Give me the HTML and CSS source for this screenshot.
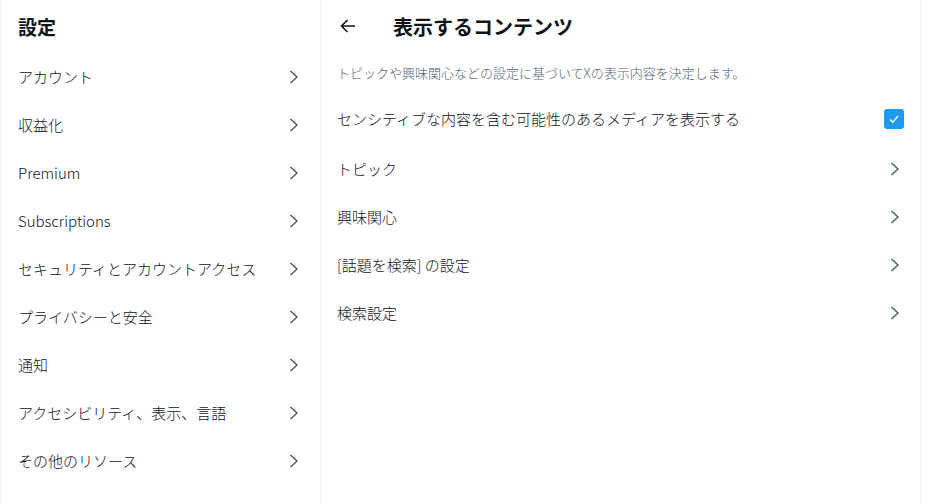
FILE: index.html
```html
<!DOCTYPE html>
<html lang="ja">
<head>
    <meta charset="UTF-8" />
    <meta name="viewport" content="width=device-width, initial-scale=1.0" />
    <title>表示するコンテンツ</title>
    <link rel="stylesheet" href="styles.css">
</head>
<body>
    <div class="layout">
        <nav class="side">
            <div class="side-head">設定</div>
            <div class="nav-item"><span>アカウント</span><svg class="chev" viewBox="0 0 10 14"><polyline points="1.5,1 8,7 1.5,13" /></svg></div>
            <div class="nav-item"><span>収益化</span><svg class="chev" viewBox="0 0 10 14"><polyline points="1.5,1 8,7 1.5,13" /></svg></div>
            <div class="nav-item"><span>Premium</span><svg class="chev" viewBox="0 0 10 14"><polyline points="1.5,1 8,7 1.5,13" /></svg></div>
            <div class="nav-item"><span>Subscriptions</span><svg class="chev" viewBox="0 0 10 14"><polyline points="1.5,1 8,7 1.5,13" /></svg></div>
            <div class="nav-item"><span>セキュリティとアカウントアクセス</span><svg class="chev" viewBox="0 0 10 14"><polyline points="1.5,1 8,7 1.5,13" /></svg></div>
            <div class="nav-item"><span>プライバシーと安全</span><svg class="chev" viewBox="0 0 10 14"><polyline points="1.5,1 8,7 1.5,13" /></svg></div>
            <div class="nav-item"><span>通知</span><svg class="chev" viewBox="0 0 10 14"><polyline points="1.5,1 8,7 1.5,13" /></svg></div>
            <div class="nav-item"><span>アクセシビリティ、表示、言語</span><svg class="chev" viewBox="0 0 10 14"><polyline points="1.5,1 8,7 1.5,13" /></svg></div>
            <div class="nav-item"><span>その他のリソース</span><svg class="chev" viewBox="0 0 10 14"><polyline points="1.5,1 8,7 1.5,13" /></svg></div>
        </nav>

        <main class="detail">
            <div class="detail-head">
                <svg class="back" viewBox="0 0 16 14"><path d="M15 7H1.5M7.5 1 1.5 7l6 6" /></svg>
                <h2>表示するコンテンツ</h2>
            </div>
            <p class="desc">トピックや興味関心などの設定に基づいてXの表示内容を決定します。</p>
            <div class="row row-check">
                <span>センシティブな内容を含む可能性のあるメディアを表示する</span>
                <span class="checkbox"><svg viewBox="0 0 20 20"><polyline points="6,10.5 8.8,13.2 14,7" /></svg></span>
            </div>
            <div class="row"><span>トピック</span><svg class="chev" viewBox="0 0 10 14"><polyline points="1.5,1 8,7 1.5,13" /></svg></div>
            <div class="row"><span>興味関心</span><svg class="chev" viewBox="0 0 10 14"><polyline points="1.5,1 8,7 1.5,13" /></svg></div>
            <div class="row"><span>[話題を検索] の設定</span><svg class="chev" viewBox="0 0 10 14"><polyline points="1.5,1 8,7 1.5,13" /></svg></div>
            <div class="row"><span>検索設定</span><svg class="chev" viewBox="0 0 10 14"><polyline points="1.5,1 8,7 1.5,13" /></svg></div>
        </main>
    </div>
</body>
</html>
```

FILE: styles.css
```css
body {
    margin: 0;
    padding: 0;
    background: #ffffff;
    color: #0f1419;
    font-family: "Noto Sans CJK JP", "Noto Sans", sans-serif;
    font-size: 15px;
    font-weight: 300;
}

.layout {
    display: flex;
    height: 504px;
}

.side {
    width: 319px;
    border-left: 1px solid #eff3f4;
    border-right: 1px solid #eff3f4;
}

.side-head {
    height: 53px;
    display: flex;
    align-items: center;
    padding: 0 16px 1px 17px;
    box-sizing: border-box;
    font-size: 19px;
    font-weight: 700;
}

.nav-item {
    height: 48px;
    display: flex;
    align-items: center;
    justify-content: space-between;
    padding: 0 21px 2px 17px;
    box-sizing: border-box;
}

.nav-item svg,
.row svg.chev {
    margin-top: 1px;
}

.chev {
    width: 10px;
    height: 14px;
    fill: none;
    stroke: #536471;
    stroke-width: 1.6;
}

.detail {
    width: 599px;
    border-right: 1px solid #eff3f4;
}

.detail-head {
    height: 53px;
    display: flex;
    align-items: center;
    padding: 0 0 1px 19px;
    box-sizing: border-box;
}

.back {
    width: 16px;
    height: 14px;
    fill: none;
    stroke: #0f1419;
    stroke-width: 1.6;
    margin-right: 37px;
}

.detail-head h2 {
    margin: 0;
    font-size: 20px;
    font-weight: 700;
}

.desc {
    margin: 0;
    height: 40px;
    display: flex;
    align-items: center;
    padding: 0 16px 2px;
    box-sizing: border-box;
    font-size: 13px;
    color: #536471;
}

.row {
    height: 48px;
    display: flex;
    align-items: center;
    justify-content: space-between;
    padding: 0 20px 2px 16px;
    box-sizing: border-box;
}

.row-check {
    height: 52px;
    padding-right: 16px;
}

.checkbox {
    width: 20px;
    height: 20px;
    border-radius: 3px;
    background: #1d9bf0;
    display: flex;
    margin-top: 2px;
}

.checkbox svg {
    width: 20px;
    height: 20px;
    fill: none;
    stroke: #ffffff;
    stroke-width: 1.4;
}
```
